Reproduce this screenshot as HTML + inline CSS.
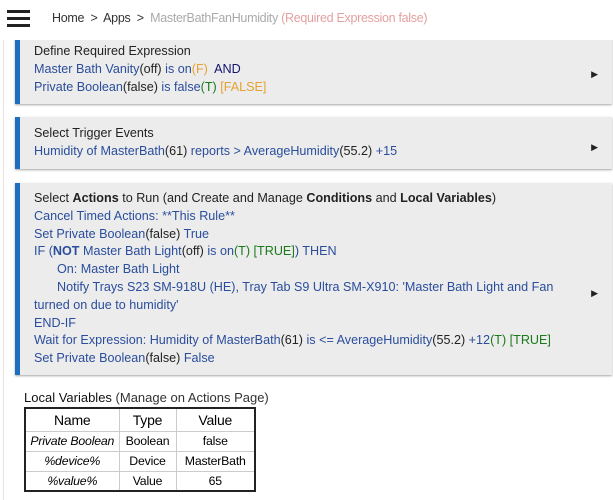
<!DOCTYPE html>
<html><head><style>
*{margin:0;padding:0;box-sizing:border-box}
body{width:613px;height:500px;overflow:hidden;background:#fff;font-family:"Liberation Sans",sans-serif;font-size:12.6px;position:relative}
.vl{position:absolute;left:3px;top:40px;bottom:0;border-left:1px solid #e4e4e4}
.hdr{position:absolute;left:0;top:0;width:613px;height:40px;background:#fff;z-index:2}
.hb{position:absolute;left:7px;width:23px;height:3px;background:#222}
.bc{position:absolute;left:52px;top:11px;font-size:12.5px;letter-spacing:-0.3px;color:#333}
.bc .g{color:#aaa}.bc .r{color:#e4a0a0}
.box{position:absolute;left:15px;width:597px;background:#ececec;border-left:5px solid #1f6fbf;box-shadow:0 1px 2px rgba(0,0,0,.35);padding-left:14px;line-height:17.8px;color:#222;white-space:nowrap}
.b{color:#2a4d9c}.k{color:#222}.o{color:#e6a232}.gr{color:#1a7a1a}.n{color:#14146e}
.arr{position:absolute;right:14px;font-size:9px;color:#222}
table{position:absolute;left:24px;top:407px;border-collapse:collapse;border:2px solid #222;font-size:12.3px;letter-spacing:-0.2px;text-align:center;white-space:nowrap}
td,th{border:1px solid #ccc;padding:0 3px;height:20px;font-weight:normal}
th{font-size:14px;height:23px}
</style></head><body>
<div class="vl"></div>
<div class="hdr">
<div class="hb" style="top:10px"></div><div class="hb" style="top:17px"></div><div class="hb" style="top:24px"></div>
<div class="bc">Home &nbsp;&gt;&nbsp; Apps &nbsp;&gt;&nbsp; <span class="g">MasterBathFanHumidity</span> <span class="r">(Required Expression false)</span></div>
</div>
<div class="box" style="top:36px;height:68px;padding-top:6px">
<div style="margin-top:1px">Define Required Expression</div>
<div class="b">Master Bath Vanity<span class="k">(off)</span> is on<span class="o">(F)</span>&nbsp; <span class="n">AND</span></div>
<div class="b">Private Boolean<span class="k">(false)</span> is false<span class="gr">(T)</span> <span class="o">[FALSE]</span></div>
<div class="arr" style="top:30px">▶</div>
</div>
<div class="box" style="top:117px;height:52px;padding-top:8px">
<div>Select Trigger Events</div>
<div class="b">Humidity of MasterBath<span class="k">(61)</span> reports &gt; AverageHumidity<span class="k">(55.2)</span> +15</div>
<div class="arr" style="top:22px">▶</div>
</div>
<div class="box" style="top:183px;height:192px;padding-top:7px">
<div>Select <b>Actions</b> to Run (and Create and Manage <b>Conditions</b> and <b>Local Variables</b>)</div>
<div class="b">Cancel Timed Actions: **This Rule**</div>
<div class="b">Set Private Boolean<span class="k">(false)</span> True</div>
<div class="b">IF (<b>NOT</b> Master Bath Light<span class="k">(off)</span> is on<span class="gr">(T) [TRUE]</span>) THEN</div>
<div class="b" style="padding-left:23px">On: Master Bath Light</div>
<div class="b" style="padding-left:23px">Notify Trays S23 SM-918U (HE), Tray Tab S9 Ultra SM-X910: 'Master Bath Light and Fan</div>
<div class="b">turned on due to humidity'</div>
<div class="b">END-IF</div>
<div class="b">Wait for Expression: Humidity of MasterBath<span class="k">(61)</span> is &lt;= AverageHumidity<span class="k">(55.2)</span> +12<span class="gr">(T) [TRUE]</span></div>
<div class="b">Set Private Boolean<span class="k">(false)</span> False</div>
<div class="arr" style="top:102px">▶</div>
</div>
<div style="position:absolute;left:24px;top:390px;font-size:13px;color:#111">Local Variables <span style="color:#333">(Manage on Actions Page)</span></div>
<table>
<tr><th style="width:94px">Name</th><th style="width:57px">Type</th><th style="width:79px">Value</th></tr>
<tr><td><i>Private Boolean</i></td><td>Boolean</td><td>false</td></tr>
<tr><td><i>%device%</i></td><td>Device</td><td>MasterBath</td></tr>
<tr><td><i>%value%</i></td><td>Value</td><td>65</td></tr>
</table>
</body></html>
